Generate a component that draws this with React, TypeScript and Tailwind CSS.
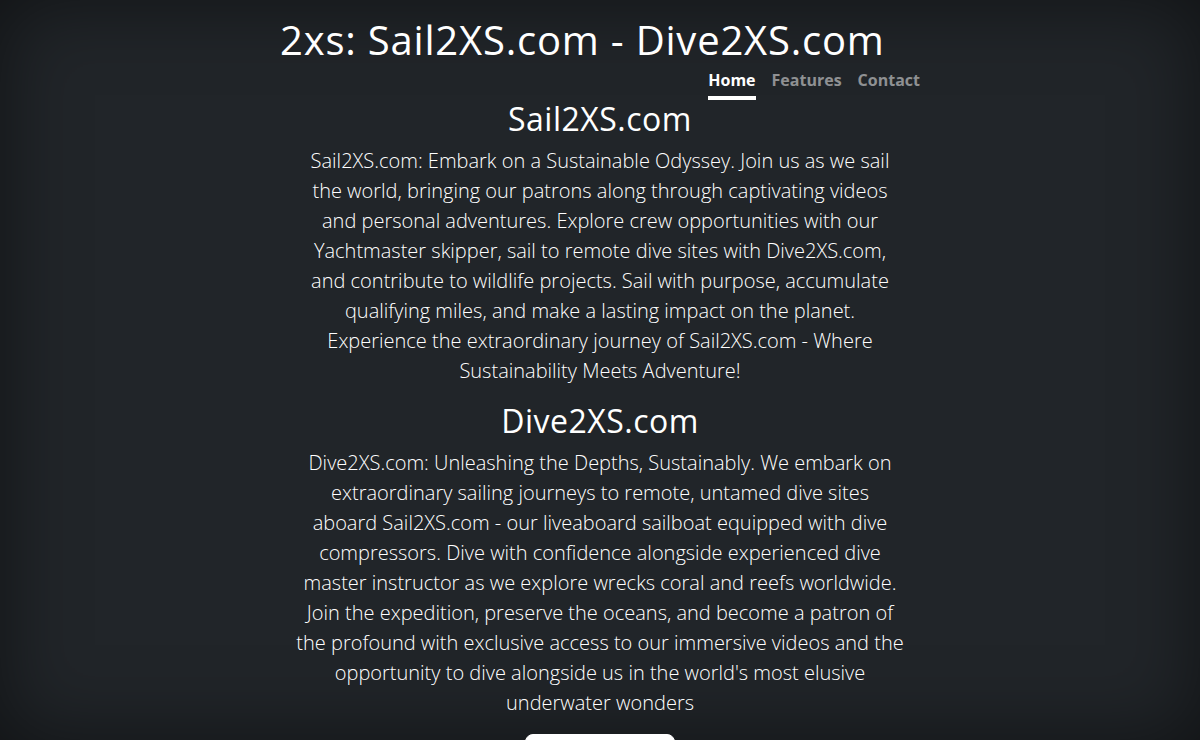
export default function App() {
    return (
        <div
            className="h-screen overflow-hidden bg-[#212529] text-white text-center shadow-[inset_0_0_5rem_rgba(0,0,0,0.5)]"
            style={{ fontFamily: '"Open Sans", "Noto Sans", sans-serif' }}
        >
            <div className="mx-auto flex h-full w-full max-w-[672px] flex-col p-4">
                {/* Header - title + nav */}
                <header className="mb-auto">
                    <h3 className="text-left text-[40px] leading-[48px] font-normal tracking-[0.8px]">
                        2xs: Sail2XS.com - Dive2XS.com
                    </h3>
                    <nav className="flex justify-end gap-4">
                        <a className="border-b-4 border-white py-1 text-base leading-6 font-bold text-white">Home</a>
                        <a className="border-b-4 border-transparent py-1 text-base leading-6 font-bold text-white/50">Features</a>
                        <a className="border-b-4 border-transparent py-1 text-base leading-6 font-bold text-white/50">Contact</a>
                    </nav>
                </header>

                <main className="px-4">
                    <h1 className="mb-2 text-[32px] leading-[38px] font-normal tracking-[0.5px]">Sail2XS.com</h1>
                    <p className="mb-4 text-xl leading-[30px] font-light">
                        Sail2XS.com: Embark on a Sustainable Odyssey. Join us as we sail the world, bringing our patrons
                        along through captivating videos and personal adventures. Explore crew opportunities with our
                        Yachtmaster skipper, sail to remote dive sites with Dive2XS.com, and contribute to wildlife
                        projects. Sail with purpose, accumulate qualifying miles, and make a lasting impact on the planet.
                        Experience the extraordinary journey of Sail2XS.com - Where Sustainability Meets Adventure!
                    </p>
                    <h1 className="mb-2 text-[32px] leading-[38px] font-normal tracking-[0.5px]">Dive2XS.com</h1>
                    <p className="mb-4 text-xl leading-[30px] font-light">
                        Dive2XS.com: Unleashing the Depths, Sustainably. We embark on extraordinary sailing journeys to
                        remote, untamed dive sites aboard{"\u00a0"}Sail2XS.com - our liveaboard sailboat equipped with dive
                        compressors. Dive with confidence alongside experienced dive master instructor as we explore
                        wrecks coral and reefs worldwide. Join the expedition, preserve the oceans, and become a patron
                        of the profound with exclusive access to our immersive videos and the opportunity to dive
                        alongside us in the world's most elusive underwater wonders
                    </p>
                    <p>
                        <a className="inline-block rounded-lg border border-white bg-white px-4 py-2 text-xl font-bold text-[#212529]">
                            Learn more
                        </a>
                    </p>
                </main>

                <footer className="mt-auto text-white/50">
                    <p>Sail2XS.com - Dive2XS.com</p>
                </footer>
            </div>
        </div>
    );
}
